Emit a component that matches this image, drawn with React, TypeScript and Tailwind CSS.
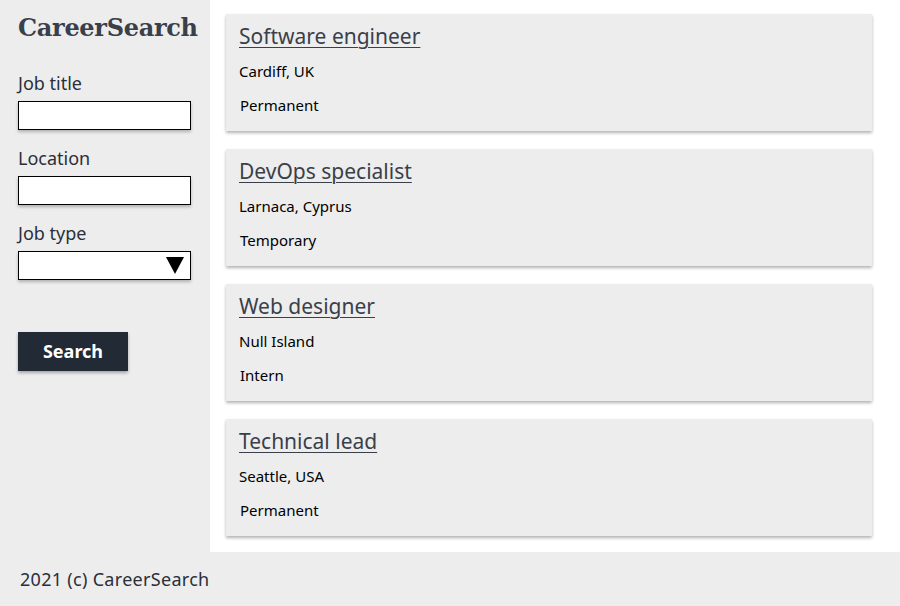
import React from 'react';

interface Job {
  title: string;
  location: string;
  type: string;
}

const jobs: Job[] = [
  { title: 'Software engineer', location: 'Cardiff, UK', type: 'Permanent' },
  { title: 'DevOps specialist', location: 'Larnaca, Cyprus', type: 'Temporary' },
  { title: 'Web designer', location: 'Null Island', type: 'Intern' },
  { title: 'Technical lead', location: 'Seattle, USA', type: 'Permanent' },
];

const Field: React.FC<{ label: string; select?: boolean }> = ({ label, select }) => (
  <div className="flex flex-col">
    <label className="text-[18px] leading-[24px] text-[#2a2f3a]">{label}</label>
    <div className="mt-[6px] w-[173px] h-[29px] bg-white border border-black shadow-[0_2px_3px_rgba(0,0,0,0.25)] flex items-center justify-end pr-[6px]">
      {select && (
        <svg width="18" height="17" viewBox="0 0 18 17">
          <polygon points="0,0 18,0 9,17" fill="black" />
        </svg>
      )}
    </div>
  </div>
);

const JobCard: React.FC<{ job: Job }> = ({ job }) => (
  <div className="h-[117px] bg-[#ededed] shadow-[0_2px_3px_rgba(0,0,0,0.3)] px-[13px] pt-[8px]">
    <a href="#" className="text-[21px] leading-[28px] text-[#3a3f4a] underline underline-offset-[3px] decoration-1">
      {job.title}
    </a>
    <div className="mt-[11px] text-[15px] leading-[20px] text-black">{job.location}</div>
    <div className="mt-[14px] ml-[1px] text-[15px] leading-[20px] text-black">{job.type}</div>
  </div>
);

export default function App() {
  return (
    <div className="w-[900px] h-[606px] flex flex-col bg-[#ededed] font-['Noto_Sans',sans-serif]">
      <div className="flex h-[552px]">
        <aside className="w-[210px] shrink-0 px-[18px] pt-[10px]">
          <h1 className="font-['DejaVu_Serif',serif] font-bold text-[24px] leading-[36px] text-[#3a3f4a] tracking-[-0.3px]">
            CareerSearch
          </h1>
          <div className="mt-[25px] flex flex-col gap-[16px]">
            <Field label="Job title" />
            <Field label="Location" />
            <Field label="Job type" select />
          </div>
          <button className="mt-[52px] w-[110px] h-[39px] bg-[#222a35] text-white font-bold text-[18px] shadow-[0_2px_3px_rgba(0,0,0,0.3)]">
            Search
          </button>
        </aside>
        <main className="flex-1 bg-white pl-[16px] pr-[28px] pt-[14px] flex flex-col gap-[18px]">
          {jobs.map((job) => (
            <JobCard key={job.title} job={job} />
          ))}
        </main>
      </div>
      <footer className="flex-1 px-[20px] flex items-center text-[18px] tracking-[0.3px] text-[#2a2f3a]">
        2021 (c) CareerSearch
      </footer>
    </div>
  );
}
